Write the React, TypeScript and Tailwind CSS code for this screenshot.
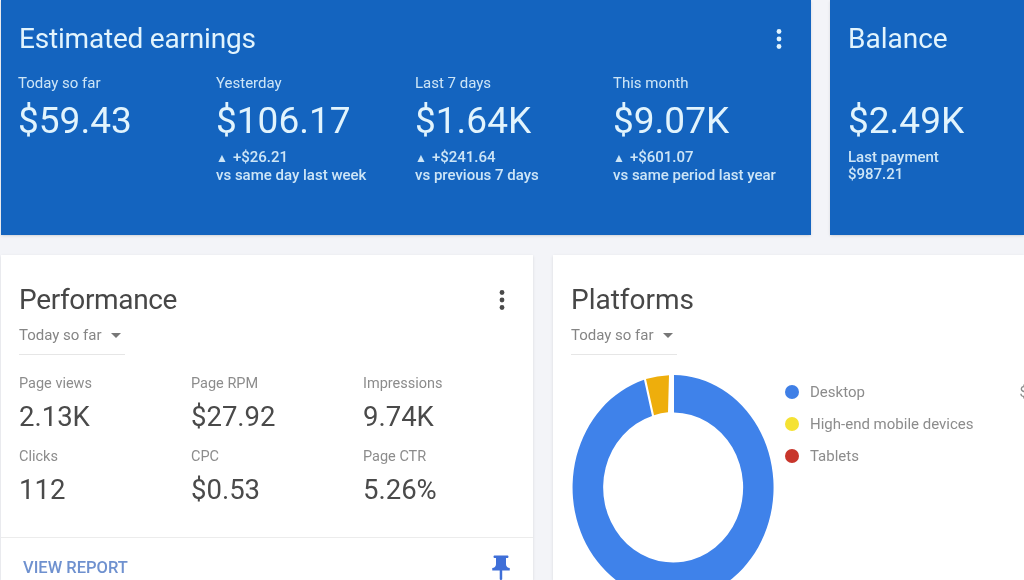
const earnings = [
  { label: "Today so far", value: "$59.43" },
  { label: "Yesterday", value: "$106.17", delta: "+$26.21", note: "vs same day last week" },
  { label: "Last 7 days", value: "$1.64K", delta: "+$241.64", note: "vs previous 7 days" },
  { label: "This month", value: "$9.07K", delta: "+$601.07", note: "vs same period last year" },
];

const stats = [
  { label: "Page views", value: "2.13K" },
  { label: "Page RPM", value: "$27.92" },
  { label: "Impressions", value: "9.74K" },
  { label: "Clicks", value: "112" },
  { label: "CPC", value: "$0.53" },
  { label: "Page CTR", value: "5.26%" },
];

const legend = [
  { label: "Desktop", dot: "bg-[#3f7fe6]", value: "$" },
  { label: "High-end mobile devices", dot: "bg-[#f5e233]", value: "" },
  { label: "Tablets", dot: "bg-[#c8352b]", value: "" },
];

const Kebab = ({ className }: { className: string }) => (
  <svg width="6" height="22" viewBox="0 0 6 22" className={className}>
    <circle cx="3" cy="3.5" r="2.4" />
    <circle cx="3" cy="11" r="2.4" />
    <circle cx="3" cy="18.5" r="2.4" />
  </svg>
);

const RangeSelect = () => (
  <div className="mt-[6px] w-[106px] h-[31px] border-b border-[#e6e6e6] flex items-start gap-[9px] text-[15px] leading-[22px] text-[#858585]">
    <span>Today so far</span>
    <svg width="10" height="5" viewBox="0 0 10 5" className="mt-[9px] fill-[#777777]">
      <path d="M0 0h10L5 5z" />
    </svg>
  </div>
);

const Donut = () => (
  <svg width="204" height="230" viewBox="571 373 204 230" className="shrink-0">
    <path
      fill="#3f82ea"
      d="M674 375A100.5 112.5 0 1 1 644 379.8L652 416A70 75 0 1 0 674 412.5Z"
    />
    <path
      fill="#eeae0c"
      d="M646 379A100.5 112.5 0 0 1 669 375.2L668 412.3A70 75 0 0 0 654 415.3Z"
    />
  </svg>
);

export default function App() {
  return (
    <div
      className="w-[1024px] h-[580px] overflow-hidden bg-[#f3f4f8] pl-px flex flex-col gap-5 blur-[0.6px]"
      style={{ fontFamily: "Roboto, sans-serif" }}
    >
      {/* Top blue cards */}
      <div className="h-[235px] shrink-0 flex gap-[19px] text-[#e2f4fd]">
        <section className="relative w-[810px] bg-[#1464bf] pl-[17px] pt-[21px] shadow-sm">
          <h2 className="ml-px text-[28px] leading-9 tracking-[-0.2px]">Estimated earnings</h2>
          <Kebab className="absolute right-[29px] top-[28px] fill-[#e2f4fd]" />
          <div className="mt-[15px] grid grid-cols-[198px_199px_198px_198px]">
            {earnings.map((item) => (
              <div key={item.label}>
                <p className="text-[15px] leading-[22px] opacity-90">{item.label}</p>
                <p className="mt-[5px] text-[37px] leading-[44px]">{item.value}</p>
                {item.delta && (
                  <div className="mt-[5px] text-[15px] leading-[18px] font-medium opacity-90">
                    <p className="h-[18px]">
                      <span className="text-[12px] leading-none mr-[5px]">▲</span>
                      {item.delta}
                    </p>
                    <p>{item.note}</p>
                  </div>
                )}
              </div>
            ))}
          </div>
        </section>

        <section className="flex-1 bg-[#1464bf] pl-[18px] pt-[21px] shadow-sm">
          <h2 className="text-[28px] leading-9">Balance</h2>
          <p className="mt-[42px] text-[37px] leading-[44px]">$2.49K</p>
          <div className="mt-[6px] text-[15px] leading-[17px] font-medium opacity-90">
            <p>Last payment</p>
            <p>$987.21</p>
          </div>
        </section>
      </div>

      {/* Bottom white cards */}
      <div className="flex-1 min-h-0 flex gap-5">
        <section className="relative w-[532px] bg-white shadow-sm overflow-hidden pt-[27px]">
          <div className="px-[18px]">
            <h2 className="text-[28px] leading-9 tracking-[-0.35px] text-[#474747]">Performance</h2>
            <Kebab className="absolute right-[28px] top-[34px] fill-[#4a4a4a]" />
            <RangeSelect />
            <div className="mt-[18px] grid grid-cols-[172px_172px_150px] gap-y-[9.5px]">
              {stats.map((stat) => (
                <div key={stat.label}>
                  <p className="text-[14.5px] leading-[22px] text-[#8c8c8c]">{stat.label}</p>
                  <p className="mt-[3px] text-[27.5px] leading-[38px] text-[#4a4a4a]">{stat.value}</p>
                </div>
              ))}
            </div>
          </div>
          <div className="mt-[28px] border-t border-[#ececec] pl-[22px] pr-[17px] pt-[17px] flex justify-between items-start">
            <span className="text-[16.5px] leading-[26px] font-medium text-[#6f91cf]">VIEW REPORT</span>
            <svg width="30" height="30" viewBox="0 0 24 24" className="-mt-[1.5px] fill-[#3f6fd8]">
              <path d="M16 9V4h1c.55 0 1-.45 1-1s-.45-1-1-1H7c-.55 0-1 .45-1 1s.45 1 1 1h1v5c0 1.66-1.34 3-3 3v2h5.97v7l1 1 1-1v-7H19v-2c-1.66 0-3-1.34-3-3z" />
            </svg>
          </div>
        </section>

        <section className="flex-1 bg-white shadow-sm overflow-hidden pt-[27px] pl-[18px]">
          <h2 className="text-[28px] leading-9 text-[#474747]">Platforms</h2>
          <RangeSelect />
          <div className="mt-[18px] flex items-start">
            <Donut />
            <div className="ml-[10px] mt-[8px] w-[243px] shrink-0 flex flex-col gap-[10px]">
              {legend.map((item) => (
                <div key={item.label} className="flex items-center text-[15px] leading-[22px] text-[#8c8c8c]">
                  <span className={`w-[14px] h-[14px] rounded-full ${item.dot}`} />
                  <span className="ml-[11px] flex-1">{item.label}</span>
                  <span>{item.value}</span>
                </div>
              ))}
            </div>
          </div>
        </section>
      </div>
    </div>
  );
}
